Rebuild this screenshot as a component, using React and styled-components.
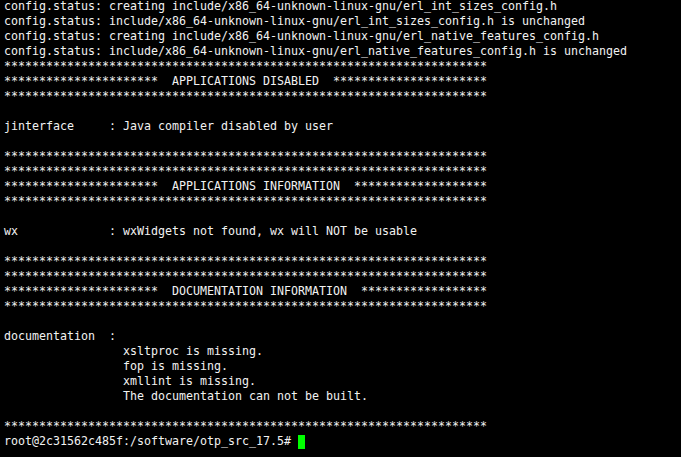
import React from "react";
import styled, { createGlobalStyle } from "styled-components";

const GlobalStyle = createGlobalStyle`
  html, body {
    margin: 0;
    padding: 0;
    background: #000;
  }
`;

const Screen = styled.div`
  width: 681px;
  height: 457px;
  overflow: hidden;
  background: #000;
  box-sizing: border-box;
  padding: 0 4px;
`;

const Output = styled.div`
  display: flex;
  flex-direction: column;
  margin-top: -1px;
  font-family: "DejaVu Sans Mono", "Liberation Mono", monospace;
  font-size: 11.63px;
  line-height: 15px;
  color: #f2f2f2;
`;

const Line = styled.div`
  height: 15px;
  white-space: pre;
  display: flex;
  align-items: center;
`;

const Cursor = styled.span`
  display: inline-block;
  width: 7px;
  height: 14px;
  background: #00ff00;
`;

const stars = "*".repeat(69);
const bar = (title, right) =>
  "*".repeat(22) + "  " + title + "  " + "*".repeat(right);

const lines = [
  "config.status: creating include/x86_64-unknown-linux-gnu/erl_int_sizes_config.h",
  "config.status: include/x86_64-unknown-linux-gnu/erl_int_sizes_config.h is unchanged",
  "config.status: creating include/x86_64-unknown-linux-gnu/erl_native_features_config.h",
  "config.status: include/x86_64-unknown-linux-gnu/erl_native_features_config.h is unchanged",
  stars,
  bar("APPLICATIONS DISABLED", 22),
  stars,
  "",
  "jinterface     : Java compiler disabled by user",
  "",
  stars,
  stars,
  bar("APPLICATIONS INFORMATION", 19),
  stars,
  "",
  "wx             : wxWidgets not found, wx will NOT be usable",
  "",
  stars,
  stars,
  bar("DOCUMENTATION INFORMATION", 18),
  stars,
  "",
  "documentation  :",
  "                 xsltproc is missing.",
  "                 fop is missing.",
  "                 xmllint is missing.",
  "                 The documentation can not be built.",
  "",
  stars,
];

const PROMPT = "root@2c31562c485f:/software/otp_src_17.5# ";

export default function App() {
  return (
    <>
      <GlobalStyle />
      <Screen>
        <Output>
          {lines.map((text, i) => (
            <Line key={i}>{text}</Line>
          ))}
          <Line>
            {PROMPT}
            <Cursor />
          </Line>
        </Output>
      </Screen>
    </>
  );
}
